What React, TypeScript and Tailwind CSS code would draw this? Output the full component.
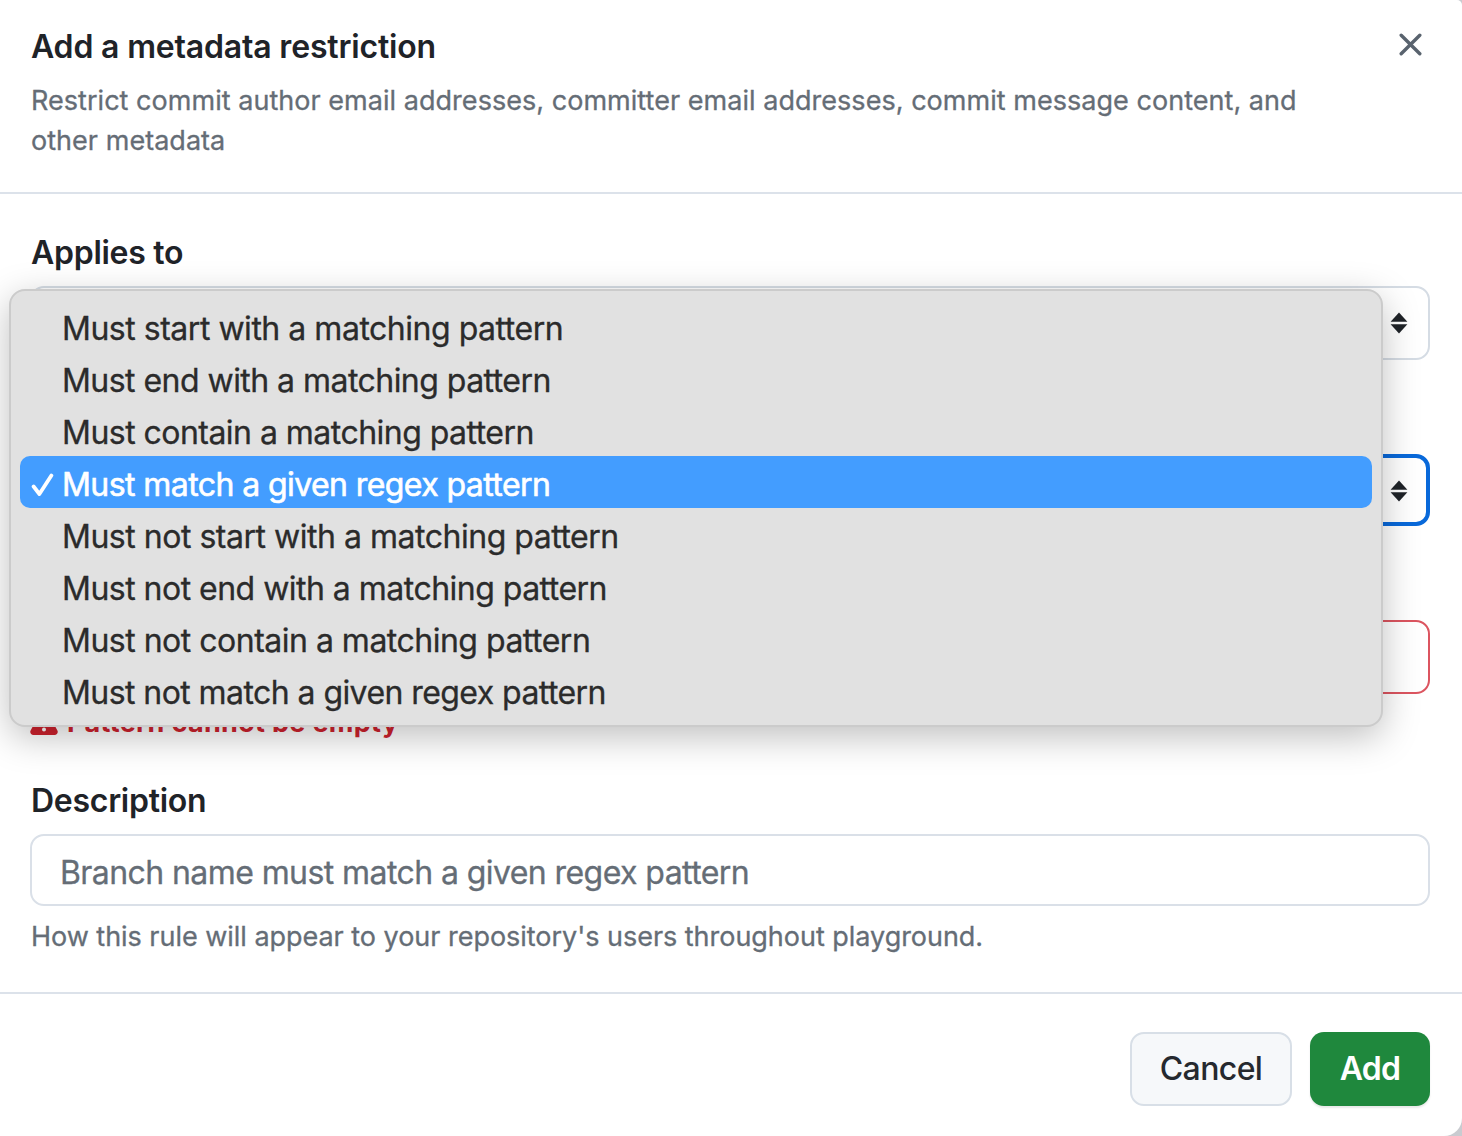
import type { ReactNode } from "react";

const options = [
  { label: "Must start with a matching pattern", track: "tracking-[-0.48px]" },
  { label: "Must end with a matching pattern", track: "tracking-[-0.54px]" },
  { label: "Must contain a matching pattern", track: "tracking-[-0.53px]" },
  { label: "Must match a given regex pattern", track: "tracking-[-0.58px]" },
  { label: "Must not start with a matching pattern", track: "tracking-[-0.48px]" },
  { label: "Must not end with a matching pattern", track: "tracking-[-0.52px]" },
  { label: "Must not contain a matching pattern", track: "tracking-[-0.5px]" },
  { label: "Must not match a given regex pattern", track: "tracking-[-0.57px]" },
];
const selected = 3;

function Sorter() {
  return (
    <svg width="18" height="22" viewBox="0 0 18 22" fill="#1f2328" aria-hidden="true">
      <path d="M9 .6 17.4 9.8H.6Z" />
      <path d="M9 21.4 17.4 12.2H.6Z" />
    </svg>
  );
}

function Label({ children }: { children: ReactNode }) {
  return (
    <div className="h-10 pl-px text-[32px] leading-10 font-semibold tracking-[-0.28px] whitespace-nowrap">{children}</div>
  );
}

function Menu() {
  return (
    <ul
      role="listbox"
      className="absolute top-[289px] left-[9px] z-10 h-[438px] w-[1374px] rounded-[16px] border-2 border-[#cbcbcb] bg-[#e1e1e1] px-[9px] pt-[9px] shadow-[0_10px_36px_rgba(0,0,0,0.25)]"
    >
      {options.map((o, i) => (
        <li
          key={o.label}
          role="option"
          aria-selected={i === selected}
          className={
            i === selected
              ? "flex h-[52px] items-center rounded-[10px] bg-[#439dff] pt-[6px] pl-[10px] text-white [-webkit-text-stroke:0.6px_white]"
              : "flex h-[52px] items-center pt-[6px] pl-[10px] text-[#2b2b2b] [-webkit-text-stroke:0.3px_#2b2b2b]"
          }
        >
          <span className="flex w-[32px] shrink-0">
            {i === selected && (
              <svg width="24" height="26" viewBox="0 0 24 26" fill="none" stroke="currentColor" strokeWidth="3.8" strokeLinecap="round" strokeLinejoin="round">
                <path d="M3.6 14.5 9.4 22 21.4 3.5" />
              </svg>
            )}
          </span>
          <span className={`text-[32px] leading-10 whitespace-nowrap ${o.track}`}>{o.label}</span>
        </li>
      ))}
    </ul>
  );
}

export default function App() {
  return (
    <div className="h-[1136px] w-[1462px] overflow-hidden bg-[#c9cbd0]">
    <div className="relative flex h-[1136px] w-[1462px] flex-col overflow-hidden rounded-tr-[5px] rounded-br-[18px] bg-white font-['Inter','Liberation_Sans',sans-serif] text-[#1f2328] [font-feature-settings:'calt'_0,'liga'_0]">
      <header className="flex h-[194px] shrink-0 justify-between border-b-2 border-[#dce2ea] pt-[27px] pr-[40px] pl-[31px]">
        <div>
          <h1 className="text-[32px] leading-10 font-semibold tracking-[-0.18px]">Add a metadata restriction</h1>
          <p className="mt-[14px] text-[27px] leading-10 tracking-[0.035px] whitespace-nowrap text-[#656d76] [-webkit-text-stroke:0.3px_#656d76]">
            Restrict commit author email addresses, committer email addresses, commit message content, and
            <br />
            other metadata
          </p>
        </div>
        <button aria-label="Close" className="mt-[6px] h-[23px] w-[23px] shrink-0">
          <svg width="23" height="23" viewBox="0 0 23 23" fill="none" stroke="#59636e" strokeWidth="3.4" strokeLinecap="round">
            <path d="M2.2 2.2 20.8 20.8M20.8 2.2 2.2 20.8" />
          </svg>
        </button>
      </header>

      <main className="flex h-[798px] shrink-0 flex-col pt-[39px] pr-[32px] pl-[30px]">
        <Label>Applies to</Label>
        <div className="mt-[13px] flex h-[74px] shrink-0 items-center justify-end rounded-[14px] border-2 border-[#d5dce4] pr-[20px]">
          <Sorter />
        </div>
        <div className="mt-[94px] flex h-[72px] shrink-0 items-center justify-end rounded-[14px] border-4 border-[#0969da] pt-[2px] pr-[18px]">
          <Sorter />
        </div>
        <div className="mt-[94px] h-[74px] shrink-0 rounded-[14px] border-2 border-[#dc5560]" />
        <div className="mt-[10px] flex h-[38px] shrink-0 items-center gap-[9px] text-[#cf222e]">
          <svg width="28" height="26" viewBox="0 0 28 26" fill="currentColor" className="-mt-[2px]">
            <path fillRule="evenodd" d="M11.3 1.8c1.2-2.1 4.2-2.1 5.4 0l10.7 19.6c1.1 2-.4 4.6-2.8 4.6H3.4C1 26-.5 23.4.6 21.4ZM12.4 8v8h3.2V8ZM14 18.5a2 2 0 1 0 0 4 2 2 0 0 0 0-4Z" />
          </svg>
          <span className="text-[27px] leading-[30px] font-bold tracking-[0.32px] whitespace-nowrap">Pattern cannot be empty</span>
        </div>
        <div className="mt-[39px]">
          <Label>Description</Label>
        </div>
        <div className="mt-[13px] flex h-[72px] shrink-0 items-center rounded-[14px] border-2 border-[#dae0e8] pt-[6px] pl-[28px] text-[32px] whitespace-nowrap text-[#656d76] [-webkit-text-stroke:0.3px_#656d76]">
          <span className="tracking-[-0.58px]">Branch name must match a given regex pattern</span>
        </div>
        <p className="mt-[11px] pl-px text-[27px] leading-10 tracking-[-0.03px] whitespace-nowrap text-[#656d76] [-webkit-text-stroke:0.3px_#656d76]">
          How this rule will appear to your repository's users throughout playground.
        </p>
      </main>

      <footer className="flex h-[144px] shrink-0 items-start justify-end gap-[18px] border-t-2 border-[#dce2ea] pt-[38px] pr-[32px]">
        <button className="h-[74px] w-[162px] rounded-[14px] border-2 border-[#d8dfe7] bg-[#f6f8fa] text-[32px] leading-10 font-medium tracking-[-0.6px] text-[#25292e]">
          Cancel
        </button>
        <button className="h-[74px] w-[120px] rounded-[14px] bg-[#1f883d] text-[32px] leading-10 font-semibold tracking-[-0.8px] text-white shadow-[0_2px_2px_rgba(31,35,40,0.1)]">
          Add
        </button>
      </footer>
      <Menu />
    </div>
    </div>
  );
}
